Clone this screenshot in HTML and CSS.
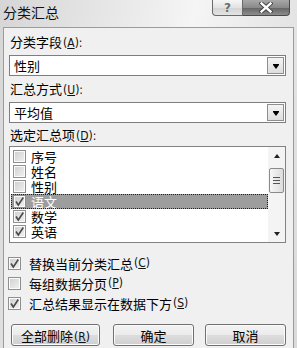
FILE: index.html
```html
<!DOCTYPE html>
<html lang="zh-CN">
<head>
  <meta charset="UTF-8">
  <title>分类汇总</title>
  <link rel="stylesheet" href="styles.css">
</head>
<body>
<div class="dialog">
  <div class="title-bar">
    <span class="title">分类汇总</span>
    <div class="title-buttons">
      <button class="btn-help">?</button>
      <button class="btn-close">
        <svg width="14" height="11" viewBox="0 0 14 11">
          <path d="M2.5 1.5 L11.5 9.5 M11.5 1.5 L2.5 9.5" stroke="#3a3a3a" stroke-width="4.2" stroke-linecap="square"/>
          <path d="M2.5 1.5 L11.5 9.5 M11.5 1.5 L2.5 9.5" stroke="#fff" stroke-width="2.4" stroke-linecap="square"/>
        </svg>
      </button>
    </div>
  </div>

  <div class="dialog-body">
    <label class="field-label">分类字段<span class="key">(<u>A</u>):</span></label>
    <div class="combo">
      <span class="combo-text">性别</span>
      <span class="combo-arrow"><i></i></span>
    </div>

    <label class="field-label label-gap">汇总方式<span class="key">(<u>U</u>):</span></label>
    <div class="combo">
      <span class="combo-text">平均值</span>
      <span class="combo-arrow"><i></i></span>
    </div>

    <label class="field-label label-gap-sm">选定汇总项<span class="key">(<u>D</u>):</span></label>
    <div class="list-box">
      <ul class="items">
        <li><span class="check"></span>序号</li>
        <li><span class="check"></span>姓名</li>
        <li><span class="check"></span>性别</li>
        <li class="selected"><span class="check"><svg width="11" height="11" viewBox="0 0 11 11"><path d="M2 5.5 L4.3 9 L9.3 1.5" fill="none" stroke="#4a4a4a" stroke-width="1.6"/></svg></span>语文</li>
        <li><span class="check"><svg width="11" height="11" viewBox="0 0 11 11"><path d="M2 5.5 L4.3 9 L9.3 1.5" fill="none" stroke="#4a4a4a" stroke-width="1.6"/></svg></span>数学</li>
        <li><span class="check"><svg width="11" height="11" viewBox="0 0 11 11"><path d="M2 5.5 L4.3 9 L9.3 1.5" fill="none" stroke="#4a4a4a" stroke-width="1.6"/></svg></span>英语</li>
      </ul>
      <div class="scrollbar">
        <span class="scroll-btn"><i class="arrow-up"></i></span>
        <span class="thumb"><i></i><i></i><i></i></span>
        <span class="scroll-space"></span>
        <span class="scroll-btn"><i class="arrow-down"></i></span>
      </div>
    </div>

    <div class="options">
      <div class="option"><span class="check"><svg width="11" height="11" viewBox="0 0 11 11"><path d="M2 5.5 L4.3 9 L9.3 1.5" fill="none" stroke="#4a4a4a" stroke-width="1.6"/></svg></span>替换当前分类汇总<span class="key">(<u>C</u>)</span></div>
      <div class="option"><span class="check"></span>每组数据分页<span class="key">(<u>P</u>)</span></div>
      <div class="option"><span class="check"><svg width="11" height="11" viewBox="0 0 11 11"><path d="M2 5.5 L4.3 9 L9.3 1.5" fill="none" stroke="#4a4a4a" stroke-width="1.6"/></svg></span>汇总结果显示在数据下方<span class="key">(<u>S</u>)</span></div>
    </div>

    <div class="actions">
      <button class="push wide">全部删除<span class="key">(<u>R</u>)</span></button>
      <button class="push ok">确定</button>
      <button class="push cancel">取消</button>
    </div>
  </div>
</div>
</body>
</html>
```

FILE: styles.css
```css
body{
  margin: 0;
  width: 297px;
  height: 348px;
  overflow: hidden;
  font-family: "Noto Sans CJK SC", "Liberation Sans", sans-serif;
  font-size: 13px;
  color: #000;
  background: linear-gradient(100deg, #d6d6d6 0%, #e9e9e9 35%, #f5f5f5 55%, #e6e6e6 80%, #dadada 100%);
}
.dialog{
  width: 297px;
}

/* 타이틀 영역 */
.title-bar{
  display: flex;
  align-items: flex-start;
  height: 27px;
}
.title{
  padding: 4px 0 0 3px;
  font-size: 14px;
  line-height: 17px;
  color: #111;
}
.title-buttons{
  display: flex;
  margin-left: auto;
  margin-right: 7px;
}
.btn-help,
.btn-close{
  display: flex;
  align-items: center;
  justify-content: center;
  height: 16px;
  padding: 0;
  border: 1px solid #6a6a6a;
  border-top: none;
}
.btn-help{
  width: 31px;
  border-radius: 0 0 0 4px;
  background: linear-gradient(#f6f6f6, #e2e2e2 50%, #d2d2d2 51%, #e4e4e4);
  color: #6a6a6a;
  font-family: "DejaVu Sans", sans-serif;
  font-size: 12px;
  font-weight: bold;
  line-height: 14px;
  text-shadow: 0 0 1px #fff;
}
.btn-close{
  width: 47px;
  border-left: none;
  border-color: #4a4a4a;
  border-radius: 0 0 4px 0;
  background: linear-gradient(#a8a8a8, #8a8a8a 50%, #636363 51%, #8e8e8e);
}

/* 본문 영역 */
.dialog-body{
  margin: 0 3px;
  padding: 5px 7px 9px 5px;
  border: 1px solid #9b9b9b;
  background-color: #f0f0f0;
}
.field-label{
  display: block;
  padding-left: 1px;
  line-height: 17px;
}
.label-gap{
  margin-top: 4px;
}
.label-gap-sm{
  margin-top: 3px;
}
.key{
  margin-left: 1px;
  font-family: "DejaVu Sans", sans-serif;
  font-stretch: condensed;
  font-size: 12px;
  color: #111;
}
.combo{
  display: flex;
  align-items: center;
  box-sizing: border-box;
  height: 21px;
  margin-top: 3px;
  border: 1px solid #7e7e7e;
  background-color: #fff;
}
.combo-text{
  padding-left: 4px;
  font-size: 13px;
}
.combo-arrow{
  display: flex;
  align-items: center;
  justify-content: center;
  box-sizing: border-box;
  width: 17px;
  height: 17px;
  margin: 0 1px 0 auto;
  border: 1px solid #8e8e8e;
  background: linear-gradient(#f4f4f4, #dedede);
}
.combo-arrow i{
  width: 0;
  height: 0;
  margin-top: 2px;
  border-top: 4px solid #000;
  border-left: 3.5px solid transparent;
  border-right: 3.5px solid transparent;
  box-shadow: 0 -1px 0 #000;
}

/* 목록 영역 */
.list-box{
  display: flex;
  box-sizing: border-box;
  height: 97px;
  margin-top: 1px;
  border: 1px solid #828282;
  background-color: #fff;
}
.items{
  flex: 1;
  margin: 0;
  padding: 2px 0 0 1px;
  list-style: none;
}
.items > li{
  display: flex;
  align-items: center;
  height: 15px;
  padding-left: 2px;
  font-size: 13px;
  line-height: 15px;
}
.items > li.selected{
  box-sizing: border-box;
  outline: 1px dotted #222;
  outline-offset: -1px;
  background-color: #9d9d9d;
  color: #fff;
}
.check{
  display: flex;
  align-items: center;
  justify-content: center;
  box-sizing: border-box;
  flex: none;
  width: 13px;
  height: 13px;
  margin-right: 5px;
  border: 1px solid #8f8f8f;
  background: linear-gradient(135deg, #cfcfcf, #f2f2f2);
  box-shadow: inset 0 0 0 1px #fbfbfb;
}
.scrollbar{
  display: flex;
  flex-direction: column;
  align-items: center;
  width: 17px;
  background-color: #f4f4f4;
}
.scroll-btn{
  display: flex;
  align-items: center;
  justify-content: center;
  width: 17px;
  height: 17px;
}
.arrow-up,
.arrow-down{
  width: 0;
  height: 0;
  border-left: 3.5px solid transparent;
  border-right: 3.5px solid transparent;
}
.arrow-up{
  border-bottom: 4px solid #222;
}
.arrow-down{
  border-top: 4px solid #222;
}
.thumb{
  display: flex;
  flex-direction: column;
  align-items: center;
  justify-content: center;
  gap: 2px;
  box-sizing: border-box;
  width: 15px;
  height: 25px;
  margin-top: 4px;
  border: 1px solid #8a8a8a;
  border-radius: 2px;
  background: linear-gradient(90deg, #f7f7f7, #dcdcdc);
}
.thumb i{
  width: 7px;
  height: 1px;
  background-color: #555;
}
.scroll-space{
  flex: 1;
}

/* 옵션 영역 */
.options{
  margin: 10px 0 0 -1px;
}
.option{
  display: flex;
  align-items: center;
  height: 20px;
  font-size: 13px;
}
.option .check{
  margin-right: 8px;
}

/* 버튼 영역 */
.actions{
  display: flex;
  margin: 11px 0 0 2px;
}
.push{
  box-sizing: border-box;
  height: 22px;
  padding: 0;
  border: 1px solid #707070;
  border-radius: 3px;
  background: linear-gradient(#f3f3f3, #ebebeb 50%, #dddddd 51%, #cfcfcf);
  box-shadow: inset 0 0 0 1px #fbfbfb;
  font-family: inherit;
  font-size: 13px;
  color: #000;
}
.wide{
  width: 89px;
}
.ok{
  width: 81px;
  margin-left: 13px;
}
.cancel{
  width: 81px;
  margin-left: 11px;
}
```
